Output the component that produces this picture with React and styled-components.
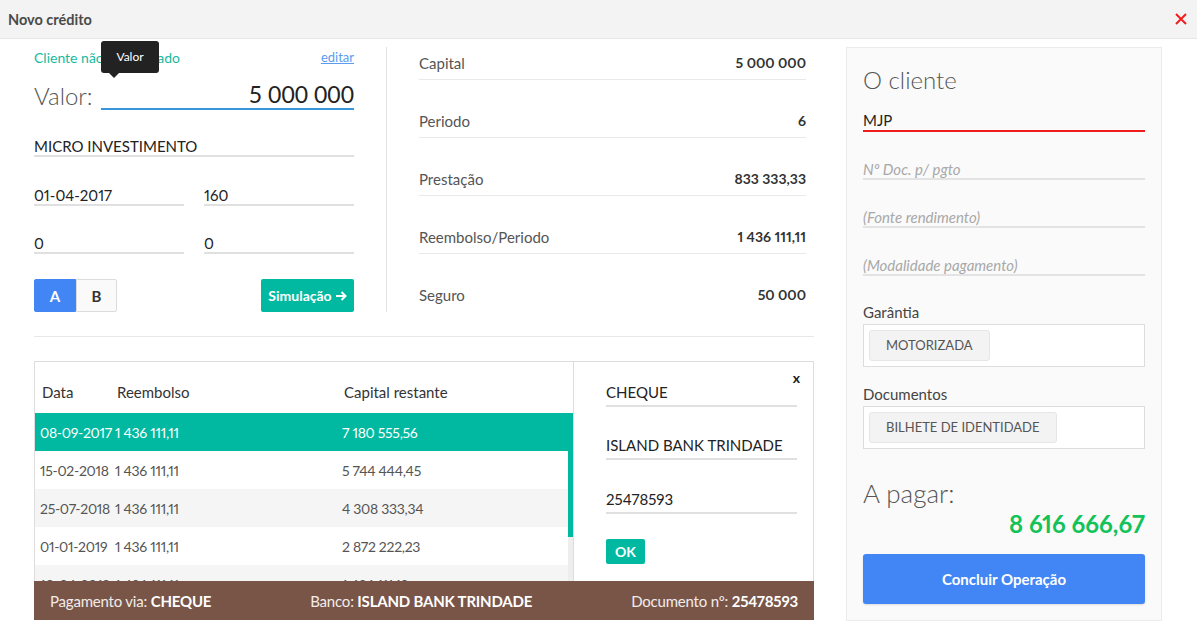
import React from "react";
import styled, { createGlobalStyle } from "styled-components";

const Global = createGlobalStyle`
  html, body { margin: 0; padding: 0; background: #fff; }
  body {
    font-family: Lato, "Open Sans", "Liberation Sans", sans-serif;
    font-variant-numeric: proportional-nums;
    color: #333;
  }
  * { box-sizing: border-box; }
`;

const TEAL = "#00b9a0";
const BLUE = "#4285f4";

const Modal = styled.div`
  width: 1197px;
  height: 640px;
  background: #fff;
  overflow: hidden;
`;

const TitleBar = styled.header`
  height: 39px;
  background: #f3f3f3;
  border-bottom: 1px solid #e6e6e6;
  display: flex;
  align-items: center;
  justify-content: space-between;
  padding: 0 10px 0 8px;
`;

const Title = styled.h1`
  margin: 0;
  font-size: 14.5px;
  font-weight: 700;
  color: #4a4a4a;
`;

const CloseIcon = styled.svg`
  width: 12px;
  height: 12px;
  display: block;
`;

const Body = styled.div`
  display: flex;
  gap: 32px;
  padding: 8px 0 0 34px;
`;

const Main = styled.div`
  width: 780px;
  display: flex;
  flex-direction: column;
`;

const TopSection = styled.div`
  display: flex;
`;

const FormColumn = styled.div`
  width: 320px;
  display: flex;
  flex-direction: column;
  margin-right: 32px;
`;

const ClientRow = styled.div`
  height: 20px;
  display: flex;
  align-items: center;
  justify-content: space-between;
`;

const ClientNote = styled.span`
  color: #17b99e;
  font-size: 14px;
`;

const EditLink = styled.a`
  color: #5b9bf0;
  font-size: 13px;
  text-decoration: underline;
  cursor: pointer;
`;

const ValorRow = styled.div`
  margin-top: 13px;
  display: flex;
  align-items: center;
  height: 30px;
`;

const ValorLabel = styled.span`
  width: 67px;
  font-size: 24px;
  font-weight: 300;
  color: #555;
`;

const ValorInput = styled.div`
  position: relative;
  flex: 1;
  height: 30px;
  border-bottom: 2px solid #3a96dc;
  text-align: right;
  font-size: 23px;
  font-variant-numeric: tabular-nums;
  line-height: 28px;
  color: #222;
`;

const Tooltip = styled.div`
  position: absolute;
  left: 0;
  top: -39px;
  width: 58px;
  height: 32px;
  background: #222;
  border-radius: 3px;
  color: #fff;
  font-size: 12px;
  line-height: 32px;
  text-align: center;
  &::after {
    content: "";
    position: absolute;
    left: 8px;
    bottom: -5px;
    border-left: 5px solid transparent;
    border-right: 5px solid transparent;
    border-top: 5px solid #222;
  }
`;

const Field = styled.div`
  width: ${(p) => p.$w || "100%"};
  margin-top: ${(p) => p.$mt || 0}px;
  padding-top: 6px;
  line-height: 18px;
  font-size: 15px;
  color: #222;
  border-bottom: 2px solid #e0e0e0;
`;

const FieldPair = styled.div`
  display: flex;
  gap: 20px;
  margin-top: ${(p) => p.$mt}px;
`;

const ActionRow = styled.div`
  margin-top: 25px;
  display: flex;
  justify-content: space-between;
  align-items: center;
`;

const Toggle = styled.div`
  display: flex;
`;

const ToggleBtn = styled.button`
  width: ${(p) => p.$w}px;
  height: 33px;
  font-family: inherit;
  font-size: 15px;
  font-weight: 700;
  border: 1px solid ${(p) => (p.$active ? BLUE : "#dcdcdc")};
  background: ${(p) => (p.$active ? BLUE : "#fafafa")};
  color: ${(p) => (p.$active ? "#fff" : "#333")};
  border-radius: ${(p) => (p.$first ? "2px 0 0 2px" : "0 2px 2px 0")};
  padding: 0;
`;

const SimButton = styled.button`
  height: 33px;
  width: 93px;
  border: none;
  border-radius: 2px;
  background: ${TEAL};
  color: #fff;
  font-family: inherit;
  font-size: 14px;
  font-weight: 700;
  padding: 0;
  display: flex;
  align-items: center;
  justify-content: center;
  gap: 3px;
`;

const SummaryColumn = styled.div`
  flex: 1;
  border-left: 1px solid #e3e3e3;
  padding: 0 8px 0 32px;
`;

const SummaryRow = styled.div`
  display: flex;
  justify-content: space-between;
  align-items: center;
  padding: 7px 0 7px;
  line-height: 18px;
  border-bottom: 1px solid ${(p) => (p.$last ? "transparent" : "#e9e9e9")};
  margin-bottom: ${(p) => (p.$last ? 0 : 25)}px;
`;

const SumLabel = styled.span`
  font-size: 15px;
  color: #555;
`;

const SumValue = styled.span`
  font-size: 14px;
  font-weight: 700;
  color: #333;
`;

const Divider = styled.hr`
  margin: 24px 0 0;
  border: none;
  height: 1px;
  background: #e8e8e8;
`;

const PlanBox = styled.div`
  margin-top: 24px;
  border: 1px solid #dddddd;
  border-bottom: none;
  display: flex;
  flex-direction: column;
`;

const PlanInner = styled.div`
  display: flex;
  height: 219px;
`;

const TablePane = styled.div`
  position: relative;
  width: 538px;
  display: flex;
  flex-direction: column;
`;

const cols = "75px 227px 1fr";

const TableHead = styled.div`
  height: 51px;
  flex: none;
  display: grid;
  grid-template-columns: ${cols};
  align-items: end;
  padding: 0 5px 12px 5px;
  font-size: 15px;
  line-height: 18px;
  color: #333;
`;

const HeadCell = styled.span`
  padding-left: 2px;
`;

const TableBody = styled.div`
  height: 168px;
  margin-right: 5px;
  overflow: hidden;
`;

const ScrollTrack = styled.div`
  position: absolute;
  right: 0;
  top: 51px;
  bottom: 0;
  width: 5px;
  background: #eeeeee;
`;

const ScrollThumb = styled.div`
  width: 100%;
  background: ${TEAL};
`;

const Row = styled.div`
  height: 38px;
  display: grid;
  grid-template-columns: ${cols};
  align-items: center;
  padding-left: 5px;
  font-size: 14px;
  letter-spacing: -0.3px;
  color: ${(p) => (p.$selected ? "#fff" : "#555")};
  background: ${(p) => (p.$selected ? TEAL : p.$odd ? "#f5f5f5" : "#fff")};
`;

const PaymentPane = styled.div`
  position: relative;
  flex: 1;
  border-left: 1px solid #dddddd;
  padding: 21px 16px 0 32px;
  display: flex;
  flex-direction: column;
`;

const PaneClose = styled.span`
  position: absolute;
  top: 9px;
  right: 13px;
  font-size: 14px;
  font-weight: 700;
  line-height: 14px;
  color: #222;
`;

const PayField = styled.div`
  margin-top: ${(p) => p.$mt}px;
  line-height: 18px;
  padding-bottom: 4px;
  font-size: 15px;
  color: #222;
  border-bottom: 2px solid #e0e0e0;
`;

const OkButton = styled.button`
  margin-top: 25px;
  width: 39px;
  height: 25px;
  border: none;
  border-radius: 2px;
  background: ${TEAL};
  color: #fff;
  font-family: inherit;
  font-size: 14px;
  font-weight: 700;
  padding: 0;
`;

const PaymentBar = styled.div`
  height: 39px;
  margin: 0 -1px;
  background: #795548;
  color: #fff;
  display: flex;
  align-items: center;
  justify-content: space-between;
  padding: 0 16px;
  font-size: 15px;
  letter-spacing: -0.2px;
`;

const BarItem = styled.span`
  color: #f1ece9;
  b { color: #fff; font-weight: 700; }
`;

const ClientPanel = styled.aside`
  width: 316px;
  height: 574px;
  background: #fafafa;
  border: 1px solid #ebebeb;
  padding: 18px 16px 0;
  display: flex;
  flex-direction: column;
`;

const PanelTitle = styled.h2`
  margin: 0;
  font-size: 24px;
  line-height: 28px;
  font-weight: 300;
  color: #555;
`;

const PanelField = styled.div`
  margin-top: ${(p) => p.$mt}px;
  line-height: 18px;
  padding-bottom: ${(p) => p.$pb || 0}px;
  font-size: 15px;
  color: ${(p) => (p.$placeholder ? "#a8a8a8" : "#222")};
  font-style: ${(p) => (p.$placeholder ? "italic" : "normal")};
  border-bottom: 2px solid ${(p) => p.$line || "#e3e3e3"};
`;

const PanelLabel = styled.div`
  margin-top: ${(p) => p.$mt}px;
  font-size: 15px;
  line-height: 18px;
  color: #444;
`;

const ChipBox = styled.div`
  margin-top: 3px;
  height: 43px;
  background: #fff;
  border: 1px solid #dddddd;
  padding: 5px;
  display: flex;
  gap: 5px;
`;

const Chip = styled.span`
  height: 31px;
  padding: 0 16px;
  background: #f3f3f3;
  border: 1px solid #e6e6e6;
  border-radius: 3px;
  font-size: 13px;
  line-height: 29px;
  color: #555;
  text-transform: uppercase;
`;

const PayTitle = styled.div`
  margin-top: 29px;
  font-size: 26px;
  line-height: 30px;
  font-weight: 300;
  color: #555;
`;

const Amount = styled.div`
  margin-top: 2px;
  text-align: right;
  font-size: 24px;
  line-height: 28px;
  font-weight: 700;
  color: #14c25a;
`;

const ConcludeButton = styled.button`
  margin-top: 16px;
  height: 50px;
  width: 100%;
  border: none;
  border-radius: 3px;
  background: ${BLUE};
  color: #fff;
  font-family: inherit;
  font-size: 15px;
  font-weight: 700;
  box-shadow: 0 1px 2px rgba(0, 0, 0, 0.12);
`;

const summary = [
  ["Capital", "5 000 000"],
  ["Periodo", "6"],
  ["Prestação", "833 333,33"],
  ["Reembolso/Periodo", "1 436 111,11"],
  ["Seguro", "50 000"],
];

const plan = [
  ["08-09-2017", "1 436 111,11", "7 180 555,56"],
  ["15-02-2018", "1 436 111,11", "5 744 444,45"],
  ["25-07-2018", "1 436 111,11", "4 308 333,34"],
  ["01-01-2019", "1 436 111,11", "2 872 222,23"],
  ["10-06-2019", "1 436 111,11", "1 436 111,12"],
  ["17-11-2019", "1 436 111,11", "0,01"],
];

const VIEW_H = 168;
const ROW_H = 38;

export default function App() {
  const thumbH = Math.round((VIEW_H * VIEW_H) / (plan.length * ROW_H));
  return (
    <>
      <Global />
      <Modal>
        <TitleBar>
          <Title>Novo crédito</Title>
          <CloseIcon viewBox="0 0 12 12">
            <path d="M1 1 L11 11 M11 1 L1 11" stroke="#f01d1d" strokeWidth="2" fill="none" />
          </CloseIcon>
        </TitleBar>
        <Body>
          <Main>
            <TopSection>
              <FormColumn>
                <ClientRow>
                  <ClientNote>Cliente não selecionado</ClientNote>
                  <EditLink>editar</EditLink>
                </ClientRow>
                <ValorRow>
                  <ValorLabel>Valor:</ValorLabel>
                  <ValorInput>
                    <Tooltip>Valor</Tooltip>
                    5 000 000
                  </ValorInput>
                </ValorRow>
                <Field $mt={21}>MICRO INVESTIMENTO</Field>
                <FieldPair $mt={23}>
                  <Field $w="150px">01-04-2017</Field>
                  <Field $w="150px">160</Field>
                </FieldPair>
                <FieldPair $mt={22}>
                  <Field $w="150px">0</Field>
                  <Field $w="150px">0</Field>
                </FieldPair>
                <ActionRow>
                  <Toggle>
                    <ToggleBtn $active $first $w={42}>A</ToggleBtn>
                    <ToggleBtn $w={41}>B</ToggleBtn>
                  </Toggle>
                  <SimButton>
                    Simulação
                    <svg width="12" height="12" viewBox="0 0 12 12">
                      <path d="M1 6 H10.5 M6.5 2 L10.5 6 L6.5 10" stroke="#fff" strokeWidth="2" fill="none" />
                    </svg>
                  </SimButton>
                </ActionRow>
              </FormColumn>
              <SummaryColumn>
                {summary.map(([k, v], i) => (
                  <SummaryRow key={k} $last={i === summary.length - 1}>
                    <SumLabel>{k}</SumLabel>
                    <SumValue>{v}</SumValue>
                  </SummaryRow>
                ))}
              </SummaryColumn>
            </TopSection>
            <Divider />
            <PlanBox>
              <PlanInner>
                <TablePane>
                  <TableHead>
                    <HeadCell>Data</HeadCell>
                    <HeadCell>Reembolso</HeadCell>
                    <HeadCell>Capital restante</HeadCell>
                  </TableHead>
                  <TableBody>
                    {plan.map((r, i) => (
                      <Row key={r[0]} $selected={i === 0} $odd={i % 2 === 0}>
                        <span>{r[0]}</span>
                        <span>{r[1]}</span>
                        <span>{r[2]}</span>
                      </Row>
                    ))}
                  </TableBody>
                  <ScrollTrack>
                    <ScrollThumb style={{ height: thumbH }} />
                  </ScrollTrack>
                </TablePane>
                <PaymentPane>
                  <PaneClose>x</PaneClose>
                  <PayField $mt={0}>CHEQUE</PayField>
                  <PayField $mt={29}>ISLAND BANK TRINDADE</PayField>
                  <PayField $mt={30}>25478593</PayField>
                  <OkButton>OK</OkButton>
                </PaymentPane>
              </PlanInner>
              <PaymentBar>
                <BarItem>Pagamento via: <b>CHEQUE</b></BarItem>
                <BarItem>Banco: <b>ISLAND BANK TRINDADE</b></BarItem>
                <BarItem>Documento nº: <b>25478593</b></BarItem>
              </PaymentBar>
            </PlanBox>
          </Main>
          <ClientPanel>
            <PanelTitle>O cliente</PanelTitle>
            <PanelField $mt={17} $pb={1} $line="#ee1c1c">MJP</PanelField>
            <PanelField $mt={28} $placeholder>Nº Doc. p/ pgto</PanelField>
            <PanelField $mt={28} $placeholder>(Fonte rendimento)</PanelField>
            <PanelField $mt={28} $placeholder>(Modalidade pagamento)</PanelField>
            <PanelLabel $mt={27}>Garântia</PanelLabel>
            <ChipBox>
              <Chip>Motorizada</Chip>
            </ChipBox>
            <PanelLabel $mt={18}>Documentos</PanelLabel>
            <ChipBox>
              <Chip>Bilhete de identidade</Chip>
            </ChipBox>
            <PayTitle>A pagar:</PayTitle>
            <Amount>8 616 666,67</Amount>
            <ConcludeButton>Concluir Operação</ConcludeButton>
          </ClientPanel>
        </Body>
      </Modal>
    </>
  );
}
